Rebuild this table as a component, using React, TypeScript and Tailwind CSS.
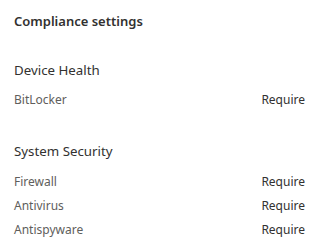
const SECTIONS = [
  { title: "Device Health", rows: ["BitLocker"] },
  { title: "System Security", rows: ["Firewall", "Antivirus", "Antispyware"] },
];

export default function App() {
  return (
    <div className="w-[336px] h-[250px] bg-white pl-[14px] pr-[31px] pt-[11px] font-['Noto_Sans',sans-serif]">
      <h2 className="text-[13px] leading-[20px] font-semibold text-[#323130]">Compliance settings</h2>

      {SECTIONS.map((s, i) => (
        <div key={s.title} className={i === 0 ? "mt-[29px]" : "mt-[29px]"}>
          <p className="text-[13.3px] leading-[20px] text-[#323130]">{s.title}</p>
          <div className={i === 0 ? "mt-[8px] flex flex-col" : "mt-[9px] flex flex-col"}>
            {s.rows.map((r) => (
              <div key={r} className="flex items-center justify-between h-[24px] text-[12px]">
                <span className="text-[#605e5c]">{r}</span>
                <span className="text-[#323130]">Require</span>
              </div>
            ))}
          </div>
        </div>
      ))}
    </div>
  );
}
